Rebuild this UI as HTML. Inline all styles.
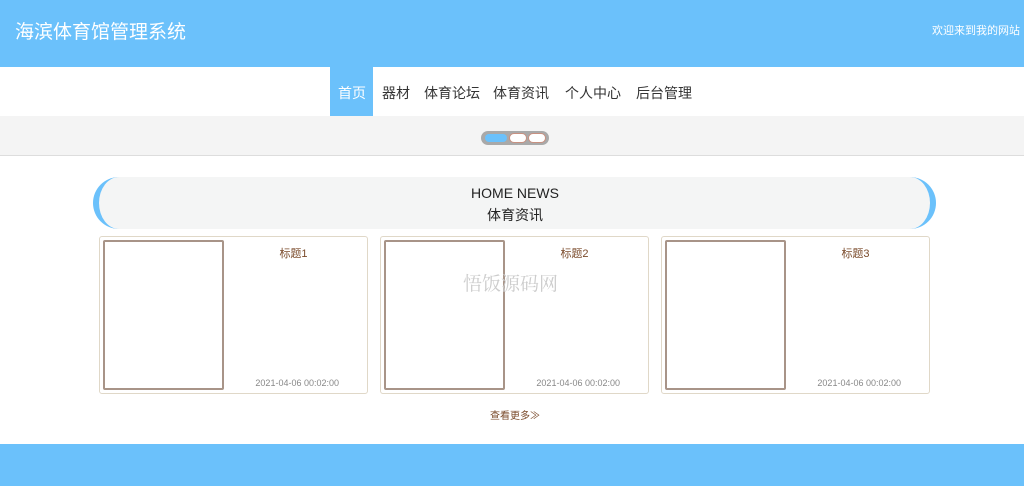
<html><head><style>
body{margin:0;width:1024px;height:486px;position:relative;font-family:"Liberation Sans","Noto Sans CJK SC",sans-serif;background:#fff;overflow:hidden}
.a{position:absolute}
.n{position:absolute;top:83px;font-size:14px;color:#333}
.card{position:absolute;top:236px;width:267px;height:156px;border:1px solid #e0d8c8;border-radius:3px;background:#fff}
.img{position:absolute;left:3px;top:3px;width:117px;height:146px;border:2px solid #a89488;border-radius:2px}
.t{position:absolute;left:120px;right:0;top:8px;text-align:center;font-size:11px;color:#7a4a2a}
.d{position:absolute;right:28px;top:141px;font-size:9px;color:#888}
</style></head><body>
<div class="a" style="left:0;top:0;width:1024px;height:67px;background:#6bc1fb"></div>
<div class="a" style="left:15px;top:17px;font-size:19px;color:#fff">海滨体育馆管理系统</div>
<div class="a" style="right:4px;top:22px;font-size:11px;color:#fff">欢迎来到我的网站</div>
<div class="a" style="left:330px;top:67px;width:43px;height:49px;background:#6bc1fb"></div>
<div class="n" style="left:338px;color:#fff">首页</div>
<div class="n" style="left:382px">器材</div>
<div class="n" style="left:424px">体育论坛</div>
<div class="n" style="left:493px">体育资讯</div>
<div class="n" style="left:565px">个人中心</div>
<div class="n" style="left:636px">后台管理</div>
<div class="a" style="left:0;top:116px;width:1024px;height:39px;background:#f4f4f4;border-bottom:1px solid #ddd"></div>
<div class="a" style="left:481px;top:131px;width:68px;height:14px;border-radius:7px;background:#a9a9a9"></div>
<div class="a" style="left:485px;top:134px;width:22px;height:8px;border-radius:4px;background:#6bc1fb"></div>
<div class="a" style="left:509px;top:133px;width:16px;height:8px;border-radius:5px;background:#fff;border:1px solid #c89080"></div>
<div class="a" style="left:528px;top:133px;width:16px;height:8px;border-radius:5px;background:#fff;border:1px solid #c89080"></div>
<div class="a" style="left:93px;top:177px;width:843px;height:52px;border-radius:26px/26px;background:#f4f5f5;border-left:6px solid #6bc1fb;border-right:6px solid #6bc1fb;box-sizing:border-box"></div>
<div class="a" style="left:0;width:1030px;top:185px;text-align:center;font-size:14px;color:#222">HOME NEWS</div>
<div class="a" style="left:0;width:1030px;top:205px;text-align:center;font-size:14px;color:#222">体育资讯</div>
<div class="card" style="left:99px"><div class="img"></div><div class="t">标题1</div><div class="d">2021-04-06 00:02:00</div></div>
<div class="card" style="left:380px"><div class="img"></div><div class="t">标题2</div><div class="d">2021-04-06 00:02:00</div></div>
<div class="card" style="left:661px"><div class="img"></div><div class="t">标题3</div><div class="d">2021-04-06 00:02:00</div></div>
<div class="a" style="left:463px;top:269px;font-size:19px;color:#ccc;font-family:'Noto Serif CJK SC',serif">悟饭源码网</div>
<div class="a" style="left:490px;top:407px;font-size:10px;color:#7a4a2a">查看更多≫</div>
<div class="a" style="left:0;top:444px;width:1024px;height:42px;background:#6bc1fb"></div>
</body></html>
